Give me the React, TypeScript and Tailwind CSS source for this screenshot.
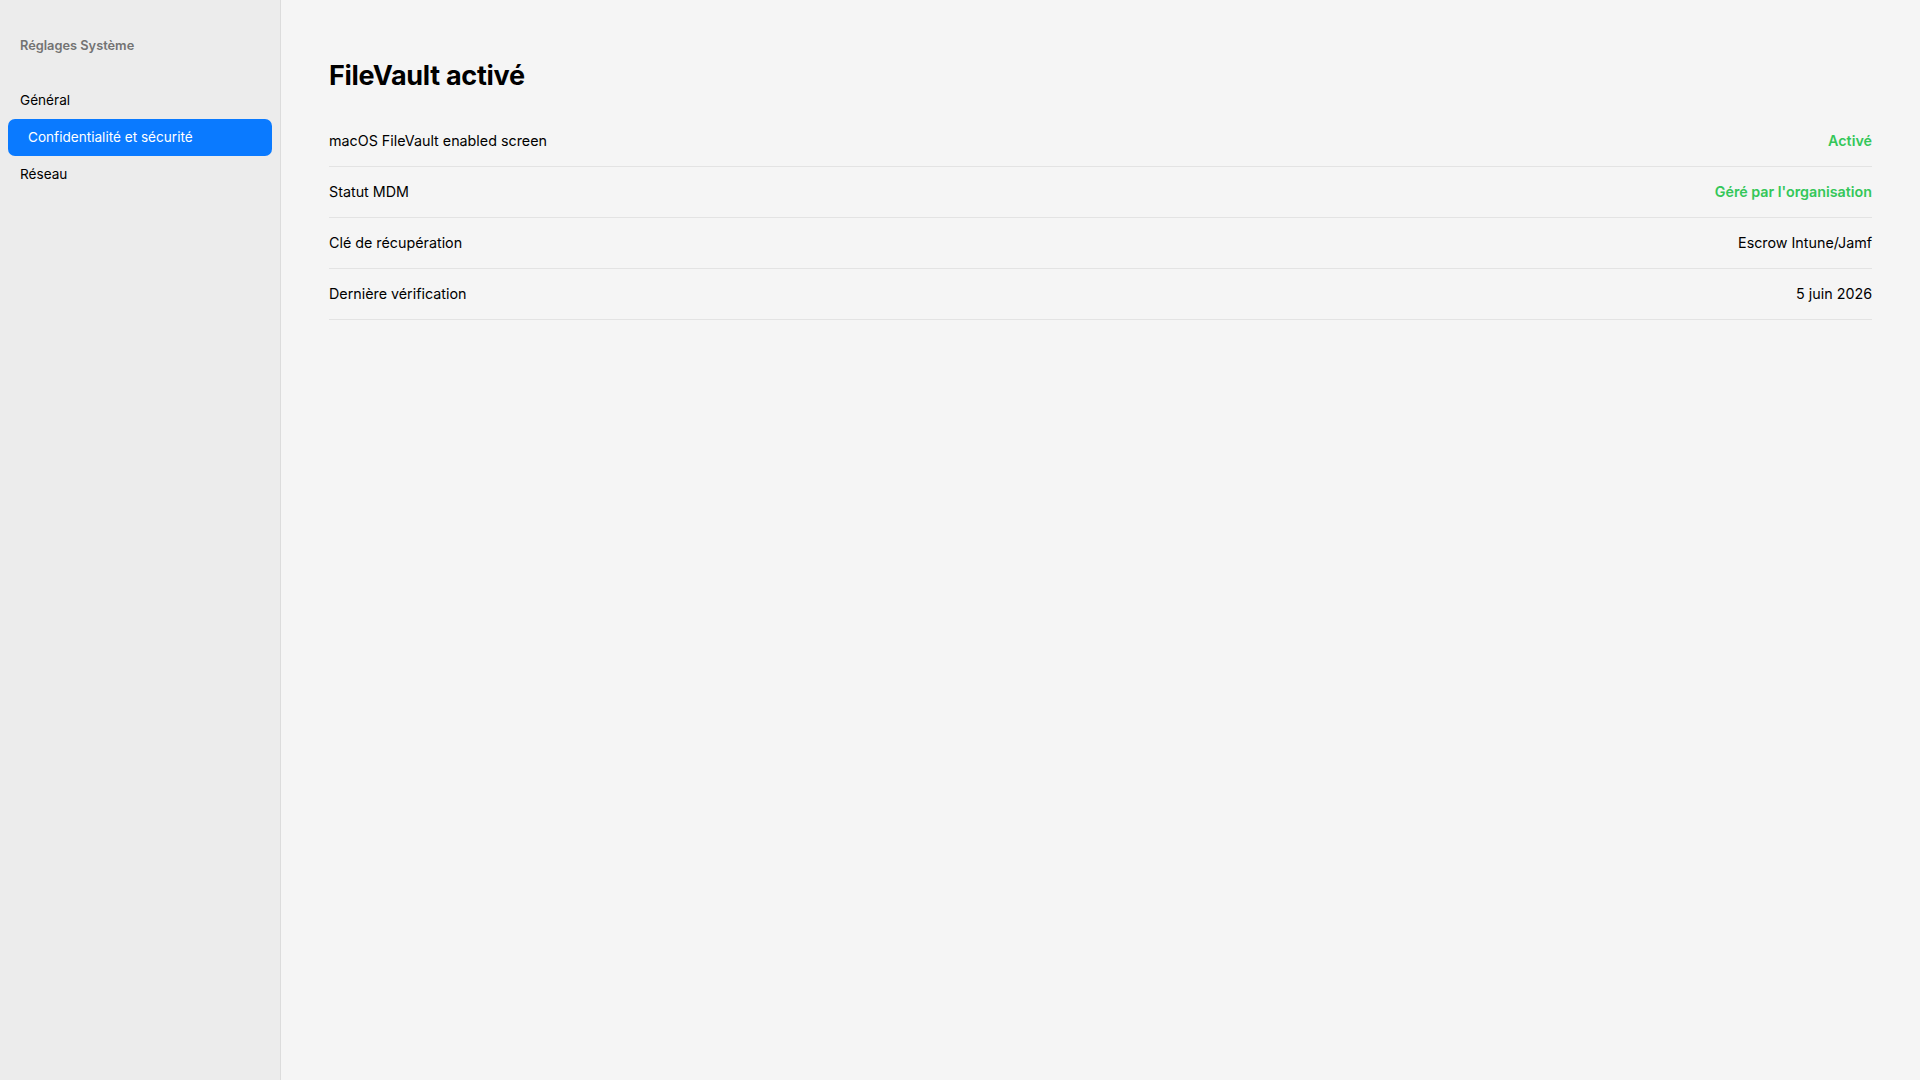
const rows = [
  { label: 'macOS FileVault enabled screen', value: 'Activé', green: true },
  { label: 'Statut MDM', value: "Géré par l'organisation", green: true },
  { label: 'Clé de récupération', value: 'Escrow Intune/Jamf', green: false },
  { label: 'Dernière vérification', value: '5 juin 2026', green: false },
]

const nav = ['Général', 'Confidentialité et sécurité', 'Réseau']

export default function App() {
  return (
    <div className="flex min-h-screen bg-[#f5f5f5] font-['Inter',sans-serif] text-[#1d1d1f]">
      <aside className="w-[281px] shrink-0 border-r border-[#dcdcdc] bg-[#ececec] px-2 pt-[36px]">
        <div className="px-3 text-[12.8px] font-semibold text-[#737373]">Réglages Système</div>
        <nav className="mt-[27px] flex flex-col">
          {nav.map((item) =>
            item === 'Confidentialité et sécurité' ? (
              <div
                key={item}
                className="flex h-[37px] items-center rounded-[7px] bg-[#0a7aff] px-5 text-[13.6px] text-white"
              >
                {item}
              </div>
            ) : (
              <div key={item} className="flex h-[37px] items-center px-3 text-[13.6px] text-black">
                {item}
              </div>
            )
          )}
        </nav>
      </aside>

      <main className="flex-1 px-12 pt-[59px]">
        <h1 className="text-[27px] leading-[34px] font-bold tracking-[-0.3px] text-black">FileVault activé</h1>
        <div className="mt-[23px]">
          {rows.map((r) => (
            <div
              key={r.label}
              className="flex h-[51px] items-center justify-between border-b border-[#e3e3e3] pb-[1px] text-[14.3px]"
            >
              <span className="text-black">{r.label}</span>
              <span className={r.green ? 'font-semibold text-[#34c759]' : 'text-black'}>{r.value}</span>
            </div>
          ))}
        </div>
      </main>
    </div>
  )
}
